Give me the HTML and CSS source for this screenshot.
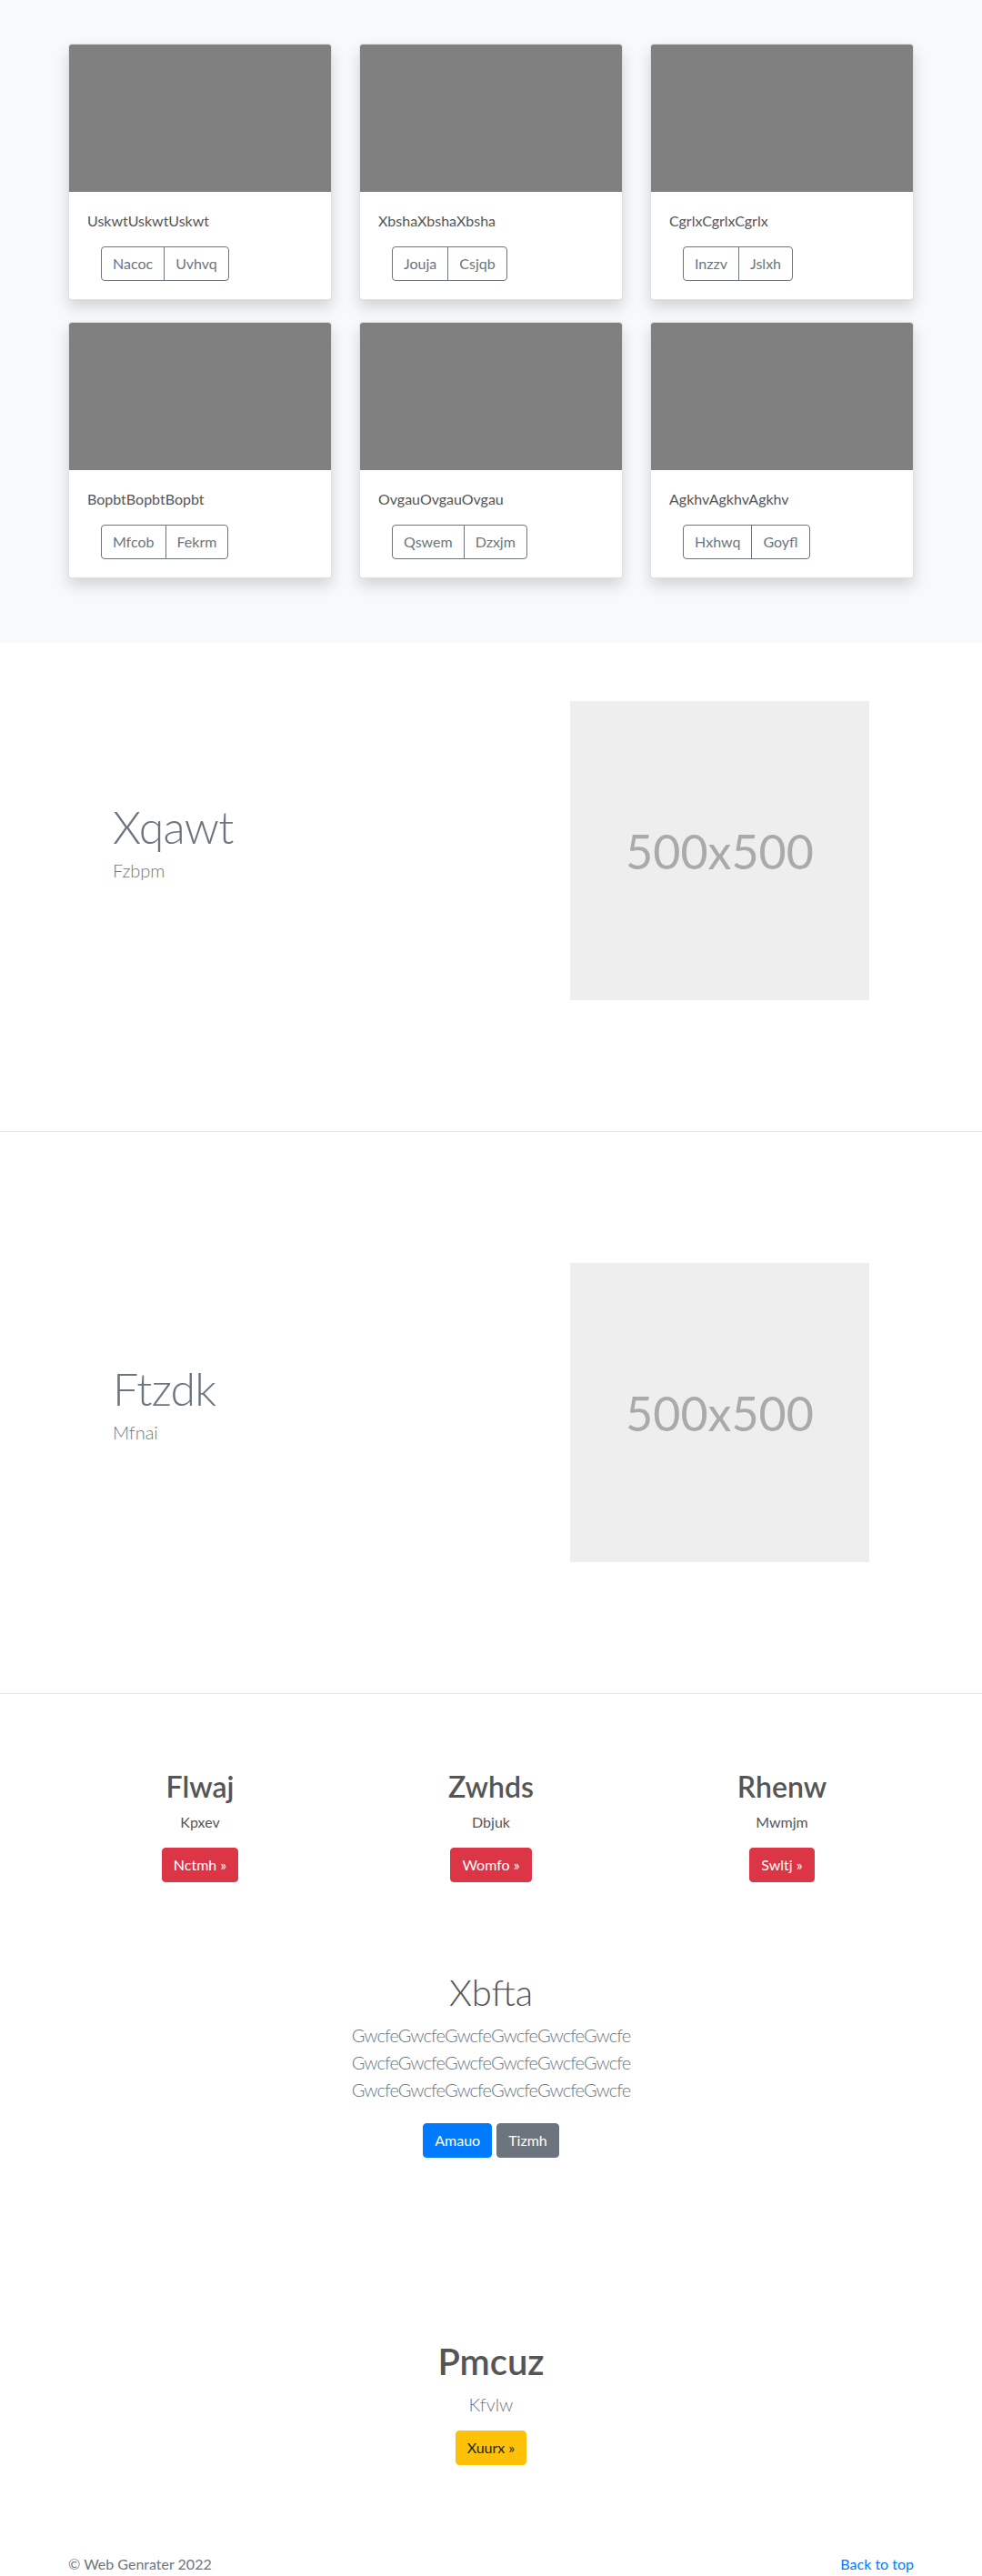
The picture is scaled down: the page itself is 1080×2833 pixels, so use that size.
FILE: index.html
```html
<!DOCTYPE html>
<html lang="en">
<head>
<meta charset="utf-8">
<title>Album</title>
<link rel="stylesheet" href="styles.css">
</head>
<body>
<main>
  <section class="album">
    <div class="container album-grid">
      <div class="card">
        <div class="card-img"></div>
        <div class="card-body">
          <p class="card-text">UskwtUskwtUskwt</p>
          <div class="btn-group"><a class="btn btn-outline" href="#">Nacoc</a><a class="btn btn-outline" href="#">Uvhvq</a></div>
        </div>
      </div>
      <div class="card">
        <div class="card-img"></div>
        <div class="card-body">
          <p class="card-text">XbshaXbshaXbsha</p>
          <div class="btn-group"><a class="btn btn-outline" href="#">Jouja</a><a class="btn btn-outline" href="#">Csjqb</a></div>
        </div>
      </div>
      <div class="card">
        <div class="card-img"></div>
        <div class="card-body">
          <p class="card-text">CgrlxCgrlxCgrlx</p>
          <div class="btn-group"><a class="btn btn-outline" href="#">Inzzv</a><a class="btn btn-outline" href="#">Jslxh</a></div>
        </div>
      </div>
      <div class="card">
        <div class="card-img"></div>
        <div class="card-body">
          <p class="card-text">BopbtBopbtBopbt</p>
          <div class="btn-group"><a class="btn btn-outline" href="#">Mfcob</a><a class="btn btn-outline" href="#">Fekrm</a></div>
        </div>
      </div>
      <div class="card">
        <div class="card-img"></div>
        <div class="card-body">
          <p class="card-text">OvgauOvgauOvgau</p>
          <div class="btn-group"><a class="btn btn-outline" href="#">Qswem</a><a class="btn btn-outline" href="#">Dzxjm</a></div>
        </div>
      </div>
      <div class="card">
        <div class="card-img"></div>
        <div class="card-body">
          <p class="card-text">AgkhvAgkhvAgkhv</p>
          <div class="btn-group"><a class="btn btn-outline" href="#">Hxhwq</a><a class="btn btn-outline" href="#">Goyfl</a></div>
        </div>
      </div>
    </div>
  </section>

  <section class="featurette">
    <div class="container featurette-row">
      <div class="featurette-text">
        <h2 class="featurette-heading">Xqawt</h2>
        <p class="lead">Fzbpm</p>
      </div>
      <div class="placeholder">500x500</div>
    </div>
  </section>

  <hr class="divider">

  <section class="featurette">
    <div class="container featurette-row">
      <div class="featurette-text">
        <h2 class="featurette-heading">Ftzdk</h2>
        <p class="lead">Mfnai</p>
      </div>
      <div class="placeholder">500x500</div>
    </div>
  </section>

  <hr class="divider">

  <section class="marketing">
    <div class="marketing-row">
      <div class="marketing-col">
        <h2>Flwaj</h2>
        <p>Kpxev</p>
        <div class="btn-line"><a class="btn btn-danger" href="#">Nctmh »</a></div>
      </div>
      <div class="marketing-col">
        <h2>Zwhds</h2>
        <p>Dbjuk</p>
        <div class="btn-line"><a class="btn btn-danger" href="#">Womfo »</a></div>
      </div>
      <div class="marketing-col">
        <h2>Rhenw</h2>
        <p>Mwmjm</p>
        <div class="btn-line"><a class="btn btn-danger" href="#">Swltj »</a></div>
      </div>
    </div>
  </section>

  <section class="hero">
    <h1 class="hero-title">Xbfta</h1>
    <p class="lead hero-lead">GwcfeGwcfeGwcfeGwcfeGwcfeGwcfe GwcfeGwcfeGwcfeGwcfeGwcfeGwcfe GwcfeGwcfeGwcfeGwcfeGwcfeGwcfe</p>
    <div class="btn-line hero-actions"><a class="btn btn-primary" href="#">Amauo</a><a class="btn btn-secondary" href="#">Tizmh</a></div>
  </section>

  <section class="cta">
    <h1 class="cta-title">Pmcuz</h1>
    <p class="lead cta-lead">Kfvlw</p>
    <div class="btn-line"><a class="btn btn-warning" href="#">Xuurx »</a></div>
  </section>
</main>

<footer class="footer">
  <div class="container footer-row">
    <p>© Web Genrater 2022</p>
    <p><a href="#">Back to top</a></p>
  </div>
</footer>
</body>
</html>
```

FILE: styles.css
```css
* { box-sizing: border-box; }

html, body { margin: 0; padding: 0; }

body {
  font-family: "Segoe UI", Lato, "Open Sans", "Liberation Sans", sans-serif;
  font-size: 16px;
  line-height: 1.5;
  color: #555;
  background: #fff;
}

.container { width: 930px; margin: 0 auto; }

p { margin: 0 0 16px; }
h1, h2 { margin: 0 0 8px; }
a { text-decoration: none; }

.btn {
  display: inline-block;
  font-size: 16px;
  line-height: 24px;
  padding: 6px 12px;
  border: 1px solid transparent;
  border-radius: 4px;
  font-weight: 400;
  text-align: center;
  white-space: nowrap;
}

.btn-line { display: flex; justify-content: center; }

/* Album */
.album { background: #f8f9fa; padding: 48px 0 71px; }
.album-grid {
  display: grid;
  grid-template-columns: repeat(3, 290px);
  column-gap: 30px;
  row-gap: 24px;
}
.card {
  background: #fff;
  border: 1px solid rgba(0, 0, 0, .125);
  border-radius: 4px;
  box-shadow: 0 8px 16px rgba(0, 0, 0, .15);
  overflow: hidden;
}
.card-img { height: 162px; background: #808080; }
.card-body { padding: 20px; }
.card-text { margin-bottom: 16px; color: #555; }
.btn-group { display: flex; width: max-content; margin-left: 15px; }
.btn-outline { color: #6c757d; border-color: #6c757d; background: transparent; }
.btn-group .btn:first-child { border-top-right-radius: 0; border-bottom-right-radius: 0; }
.btn-group .btn:last-child { margin-left: -1px; border-top-left-radius: 0; border-bottom-left-radius: 0; }

/* Featurettes */
.featurette { padding: 64px 0; }
.featurette-row { display: flex; align-items: center; }
.featurette-text { flex: 1; padding-left: 49px; }
.featurette-heading {
  font-size: 50px;
  font-weight: 300;
  line-height: 1;
  letter-spacing: -0.8px;
  color: #6c757d;
  margin: 0 0 8px;
}
.lead { font-size: 20px; font-weight: 300; line-height: 30px; }
.featurette .lead { color: #6c757d; }
.placeholder {
  width: 329px;
  height: 329px;
  margin-right: 49px;
  background: #eee;
  color: #aaa;
  font-size: 52px;
  display: flex;
  align-items: center;
  justify-content: center;
}
.divider {
  margin: 80px 0;
  height: 0;
  border: 0;
  border-top: 1px solid rgba(0, 0, 0, .1);
}

/* Marketing */
.marketing { padding-top: 3px; }
.marketing-row {
  width: 960px;
  margin: 0 auto;
  display: grid;
  grid-template-columns: repeat(3, 1fr);
}
.marketing-col { text-align: center; padding: 0 15px; }
.marketing-col h2 {
  font-size: 32px;
  font-weight: 600;
  line-height: 1.2;
  color: #555;
  margin-bottom: 8px;
}
.btn-danger { background: #dc3545; border-color: #dc3545; color: #fff; }

/* Hero */
.hero { text-align: center; padding-top: 97px; }
.hero-title { font-size: 40px; font-weight: 300; line-height: 1.2; color: #555; }
.hero-lead { width: 450px; margin: 0 auto 14px; color: #6c757d; letter-spacing: -0.95px; }
.hero-actions { gap: 5px; padding-top: 8px; }
.btn-primary { background: #007bff; border-color: #007bff; color: #fff; }
.btn-secondary { background: #6c757d; border-color: #6c757d; color: #fff; }

/* CTA */
.cta { text-align: center; padding-top: 200px; }
.cta-title { font-size: 40px; font-weight: 600; line-height: 1.2; color: #555; }
.cta-lead { color: #6c757d; margin-bottom: 14px; }
.btn-warning { background: #ffc107; border-color: #ffc107; color: #212529; }

/* Footer */
.footer { padding: 97px 0 48px; color: #6c757d; }
.footer-row { display: flex; justify-content: space-between; }
.footer p { margin: 0 0 16px; }
.footer a { color: #007bff; }
```
